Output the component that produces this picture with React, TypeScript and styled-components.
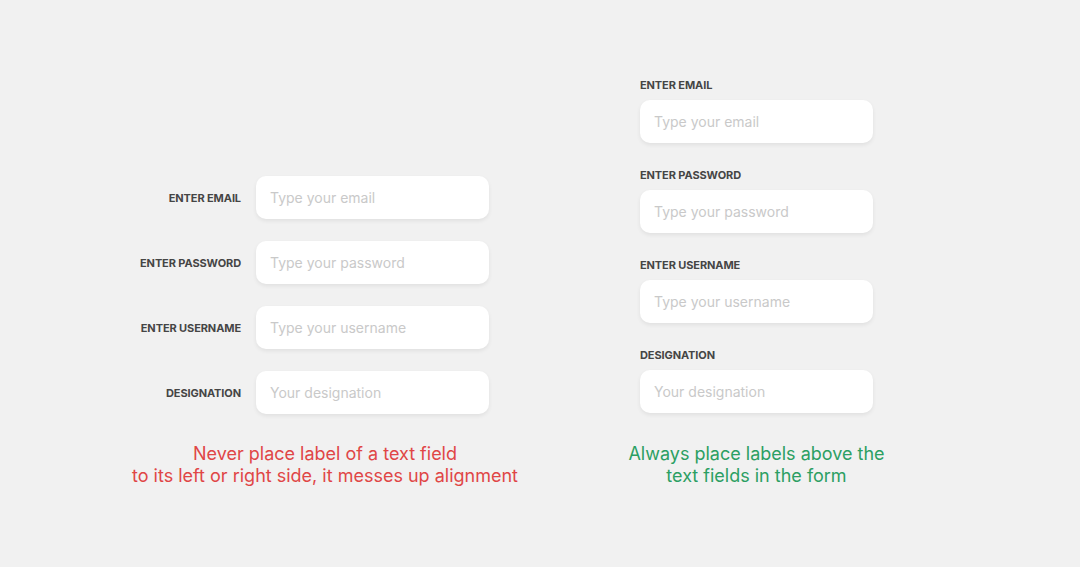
import { Fragment } from 'react'
import styled, { createGlobalStyle } from 'styled-components'

const GlobalStyle = createGlobalStyle`
  html, body {
    margin: 0;
    padding: 0;
    background: #f1f1f1;
  }
  body {
    font-family: Inter, "Noto Sans", sans-serif;
  }
`

const Page = styled.main`
  width: 1080px;
  height: 567px;
  box-sizing: border-box;
  padding: 0 0 80px 130px;
  display: flex;
  align-items: flex-end;
  gap: 106px;
`

const Panel = styled.section<{ $width: number }>`
  width: ${p => p.$width}px;
  display: flex;
  flex-direction: column;
  align-items: center;
`

const InlineForm = styled.div`
  align-self: flex-start;
  display: grid;
  grid-template-columns: 111px 233px;
  column-gap: 15px;
  row-gap: 22px;
  align-items: center;
`

const StackedForm = styled.div`
  display: flex;
  flex-direction: column;
  gap: 25px;
  margin-bottom: 1px;
`

const Field = styled.div`
  display: flex;
  flex-direction: column;
  gap: 8px;
`

const Label = styled.label<{ $right?: boolean }>`
  font-size: 11px;
  line-height: 14px;
  font-weight: 700;
  color: #454545;
  letter-spacing: -0.1px;
  text-transform: uppercase;
  text-align: ${p => (p.$right ? 'right' : 'left')};
  white-space: nowrap;
`

const Input = styled.div`
  width: 233px;
  height: 43px;
  box-sizing: border-box;
  padding: 0 14px;
  display: flex;
  align-items: center;
  background: #ffffff;
  border-radius: 10px;
  box-shadow: 0 2px 4px rgba(0, 0, 0, 0.07);
  font-size: 14px;
  color: #c9c9c9;
`

const Caption = styled.p<{ $tone: 'bad' | 'good' }>`
  margin: 29px 0 0;
  font-size: 18px;
  line-height: 22px;
  text-align: center;
  color: ${p => (p.$tone === 'bad' ? '#e04646' : '#2c9f63')};
`

const fields = [
  { label: 'Enter email', placeholder: 'Type your email' },
  { label: 'Enter password', placeholder: 'Type your password' },
  { label: 'Enter username', placeholder: 'Type your username' },
  { label: 'Designation', placeholder: 'Your designation' },
]

export default function App() {
  return (
    <>
      <GlobalStyle />
      <Page>
        <Panel $width={390}>
          <InlineForm>
            {fields.map(f => (
              <Fragment key={f.label}>
                <Label $right>{f.label}</Label>
                <Input>{f.placeholder}</Input>
              </Fragment>
            ))}
          </InlineForm>
          <Caption $tone="bad">
            Never place label of a text field
            <br />
            to its left or right side, it messes up alignment
          </Caption>
        </Panel>
        <Panel $width={261}>
          <StackedForm>
            {fields.map(f => (
              <Field key={f.label}>
                <Label>{f.label}</Label>
                <Input>{f.placeholder}</Input>
              </Field>
            ))}
          </StackedForm>
          <Caption $tone="good">
            Always place labels above the
            <br />
            text fields in the form
          </Caption>
        </Panel>
      </Page>
    </>
  )
}
